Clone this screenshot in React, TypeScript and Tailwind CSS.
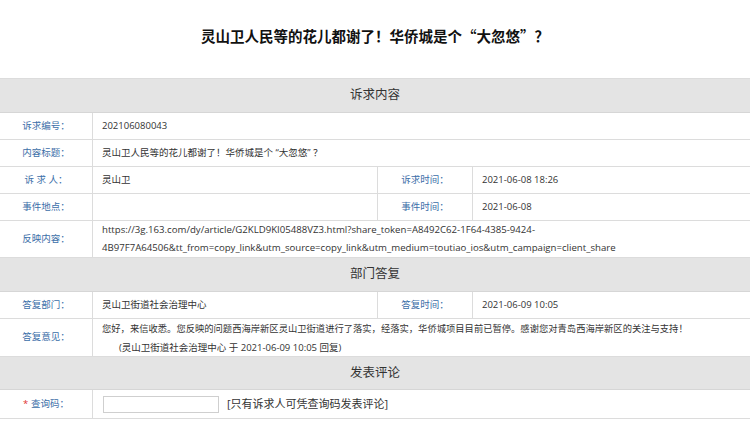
const font = { fontFamily: '"Open Sans", "Noto Sans CJK SC", sans-serif' };

function Section({ title, h = "h-[34px]" }: { title: string; h?: string }) {
  return (
    <div className={`${h} flex items-center justify-center bg-[#e4e4e4] border-b border-[#d6d6d6] text-[12.5px] text-[#333]`}>
      {title}
    </div>
  );
}

function Label({ children, w = "w-[93px]" }: { children: React.ReactNode; w?: string }) {
  return (
    <div className={`${w} shrink-0 h-full flex items-center justify-center border-r border-[#dcdcdc] text-[9.5px] text-[#3b6ea8]`}>
      {children}
    </div>
  );
}

function Row({ label, children, h = "h-[27px]" }: { label: React.ReactNode; children?: React.ReactNode; h?: string }) {
  return (
    <div className={`${h} flex border-b border-[#dcdcdc]`}>
      <Label>{label}</Label>
      <div className="flex-1 flex flex-col justify-center pl-[9px] text-[9.5px] text-[#333]">{children}</div>
    </div>
  );
}

function PairRow({ l1, v1, l2, v2 }: { l1: string; v1?: string; l2: string; v2: string }) {
  return (
    <div className="h-[27px] flex border-b border-[#dcdcdc]">
      <Label>{l1}</Label>
      <div className="w-[285px] shrink-0 h-full flex items-center pl-[9px] border-r border-[#dcdcdc] text-[9.5px] text-[#333]">{v1}</div>
      <Label w="w-[95px]">{l2}</Label>
      <div className="flex-1 flex items-center pl-[9px] text-[9.5px] text-[#333]">{v2}</div>
    </div>
  );
}

export default function App() {
  return (
    <div className="w-[750px] h-[421px] overflow-hidden bg-white" style={font}>
      <div className="h-[79px] flex items-center justify-center pb-[7px] border-b border-[#dcdcdc]">
        <h1 className="text-[14.5px] font-bold text-[#111]" style={{ fontFamily: '"Noto Sans CJK SC", sans-serif' }}>
          灵山卫人民等的花儿都谢了！华侨城是个“大忽悠”？
        </h1>
      </div>
      <Section title="诉求内容" />
      <Row label="诉求编号：">202106080043</Row>
      <Row label="内容标题：">灵山卫人民等的花儿都谢了！华侨城是个 “大忽悠” ？</Row>
      <PairRow l1="诉 求 人：" v1="灵山卫" l2="诉求时间：" v2="2021-06-08 18:26" />
      <PairRow l1="事件地点：" l2="事件时间：" v2="2021-06-08" />
      <Row label="反映内容：" h="h-[37px]">
        <div className="leading-[18px] text-[9.65px]">
          <div>https://3g.163.com/dy/article/G2KLD9KI05488VZ3.html?share_token=A8492C62-1F64-4385-9424-</div>
          <div>4B97F7A64506&amp;tt_from=copy_link&amp;utm_source=copy_link&amp;utm_medium=toutiao_ios&amp;utm_campaign=client_share</div>
        </div>
      </Row>
      <Section title="部门答复" h="h-[34px]" />
      <PairRow l1="答复部门：" v1="灵山卫街道社会治理中心" l2="答复时间：" v2="2021-06-09 10:05" />
      <Row label="答复意见：" h="h-[38px]">
        <div className="leading-[19px]">
          <div className="text-[9.3px]">您好，来信收悉。您反映的问题西海岸新区灵山卫街道进行了落实，经落实，华侨城项目目前已暂停。感谢您对青岛西海岸新区的关注与支持！</div>
          <div className="pl-[17px]">(灵山卫街道社会治理中心 于 2021-06-09 10:05 回复)</div>
        </div>
      </Row>
      <Section title="发表评论" h="h-[33px]" />
      <div className="h-[29px] flex border-b border-[#dcdcdc]">
        <Label>
          <span className="text-[#e03030] mr-[3px]">*</span>查询码：
        </Label>
        <div className="flex-1 flex items-center pl-[10px] text-[11px] text-[#333]">
          <input type="text" className="w-[116px] h-[17px] border border-[#cfcfcf] bg-white outline-none" />
          <span className="ml-[8px]">[只有诉求人可凭查询码发表评论]</span>
        </div>
      </div>
    </div>
  );
}
